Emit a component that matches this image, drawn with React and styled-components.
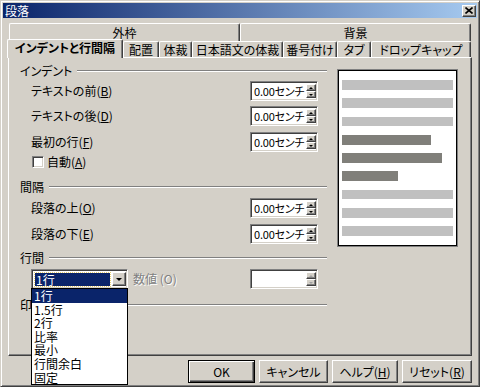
import React from 'react';
import styled, { createGlobalStyle, css } from 'styled-components';

const GlobalStyle = createGlobalStyle`
  html, body {
    margin: 0;
    padding: 0;
    background: #d4d0c8;
  }
  body {
    font-family: "Noto Sans CJK JP", "Liberation Sans", sans-serif;
    font-size: 12px;
    color: #000;
  }
`;

const raised = css`
  border-top: 1px solid #fff;
  border-left: 1px solid #fff;
  border-right: 1px solid #404040;
  border-bottom: 1px solid #404040;
  box-shadow: inset -1px -1px 0 #808080;
`;

const sunken = css`
  border-top: 1px solid #808080;
  border-left: 1px solid #808080;
  border-right: 1px solid #fff;
  border-bottom: 1px solid #fff;
  box-shadow: inset 1px 1px 0 #404040, inset -1px -1px 0 #d4d0c8;
`;

const Window = styled.div`
  box-sizing: border-box;
  width: 480px;
  height: 387px;
  padding: 2px;
  background: #d4d0c8;
  border: 1px solid;
  border-color: #d4d0c8 #404040 #404040 #d4d0c8;
  box-shadow: inset 1px 1px 0 #fff, inset -1px -1px 0 #808080;
  display: flex;
  flex-direction: column;
  line-height: 1;
  font-feature-settings: "palt";
`;

const TitleBar = styled.div`
  height: 15px;
  display: flex;
  align-items: center;
  justify-content: space-between;
  padding: 0 1px 0 2px;
  background: linear-gradient(to right, #0a246a, #a6caf0);
  color: #fff;
`;

const CloseButton = styled.div`
  box-sizing: border-box;
  width: 14px;
  height: 12px;
  background: #d4d0c8;
  ${raised};
  display: flex;
  align-items: center;
  justify-content: center;
`;

const Body = styled.div`
  padding: 5px 5px 0;
  display: flex;
  flex-direction: column;
`;

const BackTabs = styled.div`
  display: flex;
  height: 16px;
  margin: 0 1px;
`;

const BackTab = styled.div`
  flex: 1;
  box-sizing: border-box;
  height: 18px;
  border-top: 1px solid #fff;
  border-left: 1px solid #fff;
  border-right: 1px solid #404040;
  border-radius: 2px 2px 0 0;
  box-shadow: inset -1px 0 0 #808080;
  display: flex;
  justify-content: center;
  padding-top: 3px;
`;

const FrontTabs = styled.div`
  display: flex;
  align-items: flex-end;
  height: 18px;
  position: relative;
  z-index: 1;
`;

const FrontTab = styled.div`
  box-sizing: border-box;
  width: ${(p) => p.$w}px;
  height: 16px;
  background: #d4d0c8;
  border-top: 1px solid #fff;
  border-left: 1px solid #fff;
  border-right: 1px solid #404040;
  border-radius: 2px 2px 0 0;
  box-shadow: inset -1px 0 0 #808080;
  display: flex;
  align-items: center;
  justify-content: center;
  white-space: nowrap;
  ${(p) =>
    p.$active &&
    css`
      height: 19px;
      margin: 0 0 -1px -1px;
      font-weight: bold;
      padding-bottom: 2px;
    `}
`;

const Panel = styled.div`
  box-sizing: border-box;
  height: 299px;
  ${raised};
  padding-top: 6px;
  display: flex;
  align-items: flex-start;
`;

const LeftCol = styled.div`
  box-sizing: border-box;
  width: 318px;
  padding-left: 11px;
  display: flex;
  flex-direction: column;
`;

const Section = styled.div`
  height: 14px;
  margin-top: ${(p) => p.$mt || 0}px;
  display: flex;
  align-items: center;
`;

const SectionLine = styled.div`
  flex: 1;
  margin-left: 5px;
  border-top: 1px solid #808080;
  border-bottom: 1px solid #fff;
`;

const Row = styled.div`
  height: 20px;
  margin-top: ${(p) => p.$mt || 0}px;
  padding-left: 11px;
  display: flex;
  align-items: center;
`;

const FieldLabel = styled.div`
  width: 219px;
  display: flex;
  align-items: center;
`;

const Key = styled.span`
  text-decoration: underline;
`;

const Spin = styled.div`
  box-sizing: border-box;
  width: 68px;
  height: 20px;
  padding: 2px 1px 1px 2px;
  background: #fff;
  ${sunken};
  display: flex;
`;

const SpinValue = styled.div`
  flex: 1;
  min-width: 0;
  display: flex;
  align-items: center;
  padding-left: 1px;
  font-size: 11px;
  letter-spacing: -0.2px;
  white-space: nowrap;
  overflow: hidden;
`;

const SpinButtons = styled.div`
  width: 10px;
  display: flex;
  flex-direction: column;
  margin-bottom: 1px;
`;

const SpinButton = styled.div`
  box-sizing: border-box;
  flex: 1;
  background: #d4d0c8;
  ${raised};
  display: flex;
  align-items: center;
  justify-content: center;
`;

const Arrow = styled.div`
  width: 0;
  height: 0;
  border-left: ${(p) => p.$size}px solid transparent;
  border-right: ${(p) => p.$size}px solid transparent;
  ${(p) =>
    p.$up
      ? css`border-bottom: ${Math.ceil(p.$size / 1.5)}px solid ${p.$color || '#000'};`
      : css`border-top: ${Math.ceil(p.$size / 1.5)}px solid ${p.$color || '#000'};`}
`;

const CheckRow = styled.div`
  height: 14px;
  margin-top: 3px;
  padding-left: 12px;
  display: flex;
  align-items: center;
`;

const CheckBox = styled.div`
  box-sizing: border-box;
  width: 12px;
  height: 12px;
  background: #fff;
  ${sunken};
  margin-right: 3px;
`;

const ComboWrap = styled.div`
  position: relative;
  width: 97px;
`;

const Combo = styled.div`
  box-sizing: border-box;
  width: 97px;
  height: 20px;
  padding: 2px 1px 1px 2px;
  background: #fff;
  ${sunken};
  display: flex;
`;

const ComboValue = styled.div`
  flex: 1;
  margin: 1px 2px 1px 1px;
  background: #0a246a;
  color: #fff;
  outline: 1px dotted #e8d070;
  display: flex;
  align-items: center;
  padding-left: 1px;
`;

const ComboButton = styled.div`
  box-sizing: border-box;
  width: 14px;
  background: #d4d0c8;
  ${raised};
  margin-bottom: 1px;
  display: flex;
  align-items: center;
  justify-content: center;
`;

const DropList = styled.div`
  position: absolute;
  top: calc(100% - 1px);
  left: 0;
  width: 97px;
  box-sizing: border-box;
  border: 1px solid #000;
  background: #fff;
  z-index: 10;
`;

const DropItem = styled.div`
  height: 13.6px;
  line-height: 13.6px;
  padding-left: 2px;
  ${(p) =>
    p.$selected &&
    css`
      background: #0a246a;
      color: #fff;
    `}
`;

const DisabledLabel = styled.span`
  margin-left: 5px;
  color: #808080;
  text-shadow: 1px 1px 0 #fff;
`;

const Preview = styled.div`
  box-sizing: border-box;
  width: 119px;
  height: 176px;
  margin: 6px 0 0 11px;
  padding: 9px 3px;
  background: #fff;
  border: 1px solid #000;
  box-shadow: 0 0 0 1px #808080;
  display: flex;
  flex-direction: column;
  gap: 8.5px;
`;

const PreviewBar = styled.div`
  height: 10px;
  width: ${(p) => p.$w}px;
  background: ${(p) => (p.$dark ? '#807f7a' : '#c0c0c0')};
`;

const ButtonRow = styled.div`
  display: flex;
  justify-content: flex-end;
  gap: 4px;
  margin-top: 4px;
`;

const Button = styled.div`
  box-sizing: border-box;
  width: ${(p) => p.$w}px;
  height: 23px;
  background: #d4d0c8;
  ${raised};
  display: flex;
  align-items: center;
  justify-content: center;
  ${(p) =>
    p.$default &&
    css`
      border: 1px solid #000;
      box-shadow: inset 1px 1px 0 #fff, inset -1px -1px 0 #404040, inset -2px -2px 0 #808080;
    `}
`;

function SpinBox({ value, disabled }) {
  const c = disabled ? '#a0a0a0' : '#000';
  return (
    <Spin>
      <SpinValue>{value}</SpinValue>
      <SpinButtons>
        <SpinButton>
          <Arrow $up $size={2} $color={c} />
        </SpinButton>
        <SpinButton>
          <Arrow $size={2} $color={c} />
        </SpinButton>
      </SpinButtons>
    </Spin>
  );
}

const frontTabs = [
  { label: 'インデントと行間隔', w: 116, active: true },
  { label: '配置', w: 36 },
  { label: '体裁', w: 33 },
  { label: '日本語文の体裁', w: 91 },
  { label: '番号付け', w: 54 },
  { label: 'タブ', w: 34 },
  { label: 'ドロップキャップ', w: 100 },
];

const previewBars = [
  { w: 111 },
  { w: 111 },
  { w: 111 },
  { w: 89, dark: true },
  { w: 100, dark: true },
  { w: 56, dark: true },
  { w: 111 },
  { w: 111 },
  { w: 111 },
];

const spacingOptions = ['1行', '1.5行', '2行', '比率', '最小', '行間余白', '固定'];

export default function App() {
  return (
    <>
      <GlobalStyle />
      <Window>
        <TitleBar>
          <span>段落</span>
          <CloseButton>
            <svg width="8" height="7" viewBox="0 0 8 7">
              <path d="M0.5 0.5 L7.5 6.5 M7.5 0.5 L0.5 6.5" stroke="#000" strokeWidth="1.6" />
            </svg>
          </CloseButton>
        </TitleBar>
        <Body>
          <BackTabs>
            <BackTab>外枠</BackTab>
            <BackTab>背景</BackTab>
          </BackTabs>
          <FrontTabs>
            {frontTabs.map((t) => (
              <FrontTab key={t.label} $w={t.w} $active={t.active}>
                {t.label}
              </FrontTab>
            ))}
          </FrontTabs>
          <Panel>
            <LeftCol>
              <Section>
                インデント
                <SectionLine />
              </Section>
              <Row $mt={3}>
                <FieldLabel>
                  テキストの前(<Key>B</Key>)
                </FieldLabel>
                <SpinBox value="0.00センチ" />
              </Row>
              <Row $mt={5}>
                <FieldLabel>
                  テキストの後(<Key>D</Key>)
                </FieldLabel>
                <SpinBox value="0.00センチ" />
              </Row>
              <Row $mt={6}>
                <FieldLabel>
                  最初の行(<Key>F</Key>)
                </FieldLabel>
                <SpinBox value="0.00センチ" />
              </Row>
              <CheckRow>
                <CheckBox />
                自動(<Key>A</Key>)
              </CheckRow>
              <Section $mt={11}>
                間隔
                <SectionLine />
              </Section>
              <Row $mt={4}>
                <FieldLabel>
                  段落の上(<Key>O</Key>)
                </FieldLabel>
                <SpinBox value="0.00センチ" />
              </Row>
              <Row $mt={6}>
                <FieldLabel>
                  段落の下(<Key>E</Key>)
                </FieldLabel>
                <SpinBox value="0.00センチ" />
              </Row>
              <Section $mt={7}>
                行間
                <SectionLine />
              </Section>
              <Row $mt={4}>
                <FieldLabel>
                  <ComboWrap>
                    <Combo>
                      <ComboValue>1行</ComboValue>
                      <ComboButton>
                        <Arrow $size={3.5} />
                      </ComboButton>
                    </Combo>
                    <DropList>
                      {spacingOptions.map((o, i) => (
                        <DropItem key={o} $selected={i === 0}>
                          {o}
                        </DropItem>
                      ))}
                    </DropList>
                  </ComboWrap>
                  <DisabledLabel>数値 (O)</DisabledLabel>
                </FieldLabel>
                <SpinBox value="" disabled />
              </Row>
              <Section $mt={9}>
                印
                <SectionLine />
              </Section>
            </LeftCol>
            <Preview>
              {previewBars.map((b, i) => (
                <PreviewBar key={i} $w={b.w} $dark={b.dark} />
              ))}
            </Preview>
          </Panel>
          <ButtonRow>
            <Button $w={67} $default>
              OK
            </Button>
            <Button $w={69}>キャンセル</Button>
            <Button $w={66}>
              ヘルプ(<Key>H</Key>)
            </Button>
            <Button $w={70}>
              リセット(<Key>R</Key>)
            </Button>
          </ButtonRow>
        </Body>
      </Window>
    </>
  );
}
